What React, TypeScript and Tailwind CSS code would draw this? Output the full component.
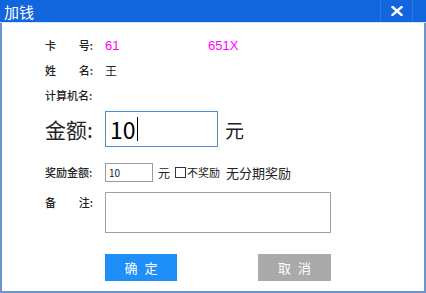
import React from "react";

const F = { fontFamily: '"Noto Sans CJK SC", "Noto Sans", sans-serif' };
const A = { fontFamily: '"Liberation Sans", Arial, sans-serif' };

export default function App() {
  return (
    <div className="w-[426px] h-[293px] bg-white flex flex-col overflow-hidden" style={F}>
      <div className="h-[22px] bg-[#1166dd] flex items-center relative shrink-0">
        <span className="ml-[4px] text-white text-[15px] leading-none">加钱</span>
        <div className="ml-auto h-full flex items-center">
          <div className="w-px h-full bg-[#2a78e4]" />
          <div className="w-[31px] h-full flex items-center justify-center">
            <svg width="12" height="10" viewBox="0 0 12 10">
              <path d="M1.5 1 L10.5 9 M10.5 1 L1.5 9" stroke="white" strokeWidth="2.4" strokeLinecap="square" />
            </svg>
          </div>
          <div className="w-px h-full bg-[#2a78e4]" />
          <div className="w-[13px]" />
        </div>
      </div>
      <div className="h-px bg-[#d6e3f3] shrink-0" />
      <div className="flex-1 border-x-2 border-b-2 border-[#6a95d0] flex flex-col pl-[43px] pt-[10px] text-[#222]">
        <div className="h-[25px] flex items-center">
          <div className="w-[60px] text-[11px] font-medium">
            <div className="w-[48px] flex justify-between"><span>卡</span><span>号:</span></div>
          </div>
          <span className="text-[#ff00ff] text-[13px] w-[103px]" style={A}>61</span>
          <span className="text-[#ff00ff] text-[13px]" style={A}>651X</span>
        </div>
        <div className="h-[25px] flex items-center">
          <div className="w-[60px] text-[11px] font-medium">
            <div className="w-[48px] flex justify-between"><span>姓</span><span>名:</span></div>
          </div>
          <span className="text-[12px]">王</span>
        </div>
        <div className="h-[25px] flex items-center">
          <div className="w-[60px] text-[11px] font-medium">计算机名:</div>
        </div>
        <div className="mt-[3px] h-[36px] flex items-center">
          <div className="w-[60px] text-[21px] leading-none">金额:</div>
          <div className="w-[113px] h-[36px] border border-[#4a8fd6] flex items-center pl-[4px]">
            <span className="text-[23px] leading-none text-black">10</span>
            <span className="w-px h-[24px] bg-black ml-[1px]" />
          </div>
          <span className="ml-[7px] text-[19px] leading-none">元</span>
        </div>
        <div className="mt-[16px] h-[19px] flex items-center">
          <div className="w-[60px] text-[11px] font-medium">奖励金额:</div>
          <div className="w-[48px] h-[19px] border border-[#9a9a9a] flex items-center pl-[3px] text-[10px]">10</div>
          <span className="ml-[5px] text-[12px]">元</span>
          <span className="ml-[5px] w-[11px] h-[11px] border border-[#333] bg-white" />
          <span className="ml-[1px] text-[11px]">不奖励</span>
          <span className="ml-[6px] text-[13px]">无分期奖励</span>
        </div>
        <div className="mt-[10px] h-[41px] flex items-start">
          <div className="w-[60px] text-[11px] font-medium pt-[2px]">
            <div className="w-[48px] flex justify-between"><span>备</span><span>注:</span></div>
          </div>
          <div className="w-[226px] h-[41px] border border-[#a0a0a0]" />
        </div>
        <div className="mt-[21px] h-[27px] flex items-center pl-[60px]">
          <div className="w-[72px] h-[27px] bg-[#1e8ff7] text-white text-[13px] flex items-center justify-center tracking-[7px] pl-[7px]">确定</div>
          <div className="ml-[81px] w-[73px] h-[27px] bg-[#aaaaaa] text-white text-[13px] flex items-center justify-center tracking-[7px] pl-[7px]">取消</div>
        </div>
      </div>
    </div>
  );
}
